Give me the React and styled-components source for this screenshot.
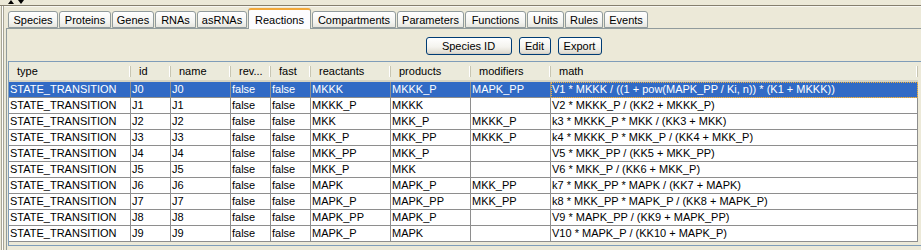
import styled, { createGlobalStyle } from "styled-components"

const Global = createGlobalStyle`
    html, body {
        margin: 0;
        padding: 0;
        background: #ECE9D8;
        overflow: hidden;
    }
    body {
        font-family: "Liberation Sans", Arial, sans-serif;
        font-size: 11px;
        color: #000;
    }
    #root {
        width: 921px;
        height: 250px;
        overflow: hidden;
    }
`

const tabs = [
    { label: "Species", width: 50 },
    { label: "Proteins", width: 52 },
    { label: "Genes", width: 42 },
    { label: "RNAs", width: 41 },
    { label: "asRNAs", width: 50 },
    { label: "Reactions", width: 63, active: true },
    { label: "Compartments", width: 84 },
    { label: "Parameters", width: 67 },
    { label: "Functions", width: 61 },
    { label: "Units", width: 37 },
    { label: "Rules", width: 38 },
    { label: "Events", width: 44 },
]

const columns = [
    { key: "type", label: "type", width: 122 },
    { key: "id", label: "id", width: 40 },
    { key: "name", label: "name", width: 60 },
    { key: "rev", label: "rev...", width: 40 },
    { key: "fast", label: "fast", width: 40 },
    { key: "reactants", label: "reactants", width: 80 },
    { key: "products", label: "products", width: 80 },
    { key: "modifiers", label: "modifiers", width: 80 },
    { key: "math", label: "math", width: 367 },
]

const reactions = [
    ["J0", "MKKK", "MKKK_P", "MAPK_PP", "V1 * MKKK / ((1 + pow(MAPK_PP / Ki, n)) * (K1 + MKKK))"],
    ["J1", "MKKK_P", "MKKK", "", "V2 * MKKK_P / (KK2 + MKKK_P)"],
    ["J2", "MKK", "MKK_P", "MKKK_P", "k3 * MKKK_P * MKK / (KK3 + MKK)"],
    ["J3", "MKK_P", "MKK_PP", "MKKK_P", "k4 * MKKK_P * MKK_P / (KK4 + MKK_P)"],
    ["J4", "MKK_PP", "MKK_P", "", "V5 * MKK_PP / (KK5 + MKK_PP)"],
    ["J5", "MKK_P", "MKK", "", "V6 * MKK_P / (KK6 + MKK_P)"],
    ["J6", "MAPK", "MAPK_P", "MKK_PP", "k7 * MKK_PP * MAPK / (KK7 + MAPK)"],
    ["J7", "MAPK_P", "MAPK_PP", "MKK_PP", "k8 * MKK_PP * MAPK_P / (KK8 + MAPK_P)"],
    ["J8", "MAPK_PP", "MAPK_P", "", "V9 * MAPK_PP / (KK9 + MAPK_PP)"],
    ["J9", "MAPK_P", "MAPK", "", "V10 * MAPK_P / (KK10 + MAPK_P)"],
].map(([id, reactants, products, modifiers, math]) => ({
    type: "STATE_TRANSITION",
    id,
    name: id,
    rev: "false",
    fast: "false",
    reactants,
    products,
    modifiers,
    math,
}))

// the real window is wider than the screenshot, so the button row centres on 1019px
const Window = styled.div`
    width: 1019px;
    height: 250px;
    display: flex;
    flex-direction: column;
`

const Splitter = styled.div`
    height: 5px;
    border-bottom: 1px solid #857F6E;
    box-shadow: 0 1px 0 #F8F7F1;
    display: flex;
    align-items: flex-end;
    padding-left: 8px;
    overflow: hidden;
`

const Arrow = styled.span`
    width: 0;
    height: 0;
    border-left: 3px solid transparent;
    border-right: 3px solid transparent;
    margin-bottom: 1px;
    ${p => p.$up
        ? "border-bottom: 4px solid #000;"
        : "border-top: 4px solid #000; margin-left: 4px;"}
`

const Frame = styled.div`
    flex: 1;
    margin-left: 1px;
    border-left: 1px solid #A7A596;
    box-shadow: inset 1px 0 0 #FFFFFF, inset 2px 0 0 #A7A596;
    display: flex;
    flex-direction: column;
`

const TabStrip = styled.div`
    height: 22px;
    display: flex;
    align-items: flex-end;
    gap: 1px;
    padding-left: 6px;
    position: relative;
    z-index: 1;
`

const Tab = styled.div`
    box-sizing: border-box;
    width: ${p => p.$width}px;
    height: ${p => (p.$active ? 21 : 17)}px;
    margin-bottom: ${p => (p.$active ? -1 : 0)}px;
    border: 1px solid #919B9C;
    border-bottom: ${p => (p.$active ? "none" : "1px solid #919B9C")};
    border-top: ${p => (p.$active ? "2px solid #F2A83A" : "1px solid #919B9C")};
    border-radius: 3px 3px 0 0;
    background: ${p => (p.$active
        ? "#FCFCFE"
        : "linear-gradient(#FFFFFF, #F3F3EF 70%, #E6E5DE)")};
    display: flex;
    align-items: center;
    justify-content: center;
    padding-top: ${p => (p.$active ? 0 : 1)}px;
    white-space: nowrap;
`

const Panel = styled.div`
    flex: 1;
    margin-left: 4px;
    border-top: 1px solid #919B9C;
    border-left: 1px solid #919B9C;
    padding: 8px 0 0 1px;
    display: flex;
    flex-direction: column;
`

const ButtonRow = styled.div`
    display: flex;
    justify-content: center;
    gap: 7px;
    height: 18px;
`

const Button = styled.button`
    box-sizing: border-box;
    width: ${p => p.$width}px;
    height: 18px;
    padding: 0;
    border: 1px solid #003C74;
    border-radius: 3px;
    background: linear-gradient(#FFFFFF, #F4F3EE 55%, #DCD8CC);
    font-family: "Liberation Sans", Arial, sans-serif;
    font-size: 11px;
    color: #000;
    box-shadow: inset 0 -1px 0 #D6D0C5;
`

const ScrollPane = styled.div`
    margin-top: 6px;
    height: 183px;
    border: 1px solid #7F9DB9;
    border-right: none;
    background: #ECE9D8;
    overflow: hidden;
`

const Table = styled.table`
    table-layout: fixed;
    border-collapse: separate;
    border-spacing: 0;
    width: 909px;
`

const HeadCell = styled.th`
    box-sizing: border-box;
    height: 20px;
    padding: 0 0 1px 8px;
    text-align: left;
    font-weight: normal;
    background: #EBEADB;
    border-bottom: 2px solid #D6D3C4;
    white-space: nowrap;
    overflow: hidden;
    position: relative;

    &::after {
        content: "";
        position: absolute;
        right: 0;
        top: 4px;
        bottom: 3px;
        width: 1px;
        background: #C7C5B2;
        box-shadow: -1px 0 0 #FFFFFF;
    }
`

const Row = styled.tr`
    background: ${p => (p.$selected ? "#316AC5" : "#FFFFFF")};
    color: ${p => (p.$selected ? "#FFFFFF" : "#000000")};
`

const Cell = styled.td`
    box-sizing: border-box;
    height: 16px;
    padding: 0 0 0 1px;
    border-right: 1px solid #8E8E8E;
    border-bottom: 1px solid #8E8E8E;
    line-height: 15px;
    white-space: nowrap;
    overflow: hidden;
    ${p => p.$focus && "outline: 1px dotted #F2B13C; outline-offset: -1px;"}
`

function App() {
    return (
        <>
            <Global />
            <Window>
                <Splitter>
                    <Arrow $up />
                    <Arrow />
                </Splitter>
                <Frame>
                    <TabStrip>
                        {tabs.map(t => (
                            <Tab key={t.label} $width={t.width} $active={t.active}>
                                {t.label}
                            </Tab>
                        ))}
                    </TabStrip>
                    <Panel>
                        <ButtonRow>
                            <Button $width={86}>Species ID</Button>
                            <Button $width={32}>Edit</Button>
                            <Button $width={44}>Export</Button>
                        </ButtonRow>
                        <ScrollPane>
                            <Table>
                                <colgroup>
                                    {columns.map(c => <col key={c.key} style={{ width: c.width }} />)}
                                </colgroup>
                                <thead>
                                    <tr>
                                        {columns.map(c => <HeadCell key={c.key}>{c.label}</HeadCell>)}
                                    </tr>
                                </thead>
                                <tbody>
                                    {reactions.map((r, i) => (
                                        <Row key={r.id} $selected={i === 0}>
                                            {columns.map(c => (
                                                <Cell key={c.key} $focus={i === 0 && c.key === "math"}>
                                                    {r[c.key]}
                                                </Cell>
                                            ))}
                                        </Row>
                                    ))}
                                </tbody>
                            </Table>
                        </ScrollPane>
                    </Panel>
                </Frame>
            </Window>
        </>
    )
}

export default App
